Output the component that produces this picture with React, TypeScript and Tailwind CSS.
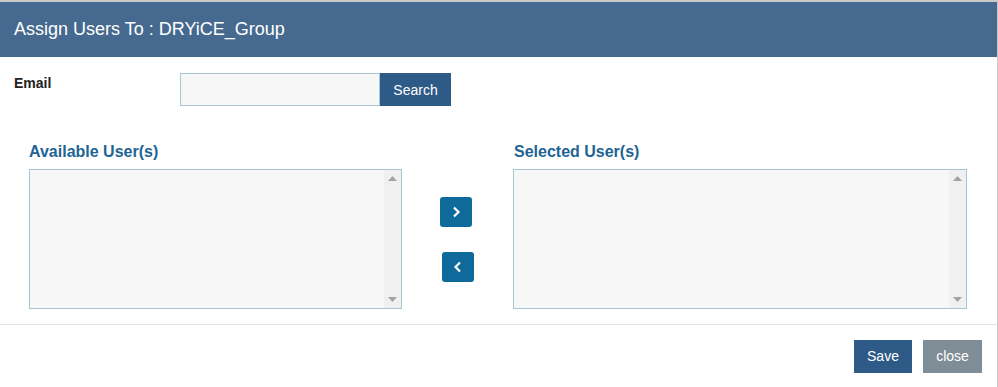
import React from "react";

function ListBox({ width }: { width: string }) {
  return (
    <div className={`${width} h-[140px] border border-[#a7c7d6] bg-[#f7f7f7] flex justify-end`}>
      <div className="w-[17px] h-full bg-[#f0f0f0] flex flex-col items-center justify-between py-[6px]">
        <svg width="9" height="5" viewBox="0 0 9 5"><polygon points="0,5 9,5 4.5,0" fill="#a3a3a3" /></svg>
        <svg width="9" height="5" viewBox="0 0 9 5"><polygon points="0,0 9,0 4.5,5" fill="#a3a3a3" /></svg>
      </div>
    </div>
  );
}

export default function App() {
  return (
    <div className="w-[998px] h-[387px] border-t-2 border-r border-[#c9c9c9] bg-white font-['Liberation_Sans',Arial,sans-serif] overflow-hidden">
      <div className="h-[55px] bg-[#466a8f] flex items-center pl-[14px] text-[18px] text-white">
        Assign Users To : DRYiCE_Group
      </div>
      <div className="flex mt-[16px]">
        <div className="w-[180px] pl-[14px] text-[14px] leading-[20px] font-bold text-[#222]">Email</div>
        <input className="w-[200px] h-[33px] border border-[#a7c7d6] bg-[#f7f7f7] outline-none" />
        <button className="w-[71px] h-[33px] bg-[#2e5a87] text-white text-[14px] pt-[1px]">Search</button>
      </div>
      <div className="flex mt-[36px] pl-[29px]">
        <div className="flex flex-col">
          <div className="text-[16px] font-bold text-[#1e6494] h-[20px] leading-[20px]">Available User(s)</div>
          <div className="mt-[7px]">
            <ListBox width="w-[373px]" />
          </div>
        </div>
        <div className="w-[111px] flex flex-col pt-[55px]">
          <button className="ml-[38px] w-[32px] h-[30px] rounded-[3px] bg-[#0f699b] flex items-center justify-center">
            <svg width="10" height="14" viewBox="0 0 10 14"><polyline points="3,2.5 7.5,7 3,11.5" fill="none" stroke="white" strokeWidth="2.2" /></svg>
          </button>
          <button className="ml-[40px] mt-[25px] w-[32px] h-[30px] rounded-[3px] bg-[#0f699b] flex items-center justify-center">
            <svg width="10" height="14" viewBox="0 0 10 14"><polyline points="7,2.5 2.5,7 7,11.5" fill="none" stroke="white" strokeWidth="2.2" /></svg>
          </button>
        </div>
        <div className="flex flex-col">
          <div className="pl-[1px] text-[16px] font-bold text-[#1e6494] h-[20px] leading-[20px]">Selected User(s)</div>
          <div className="mt-[7px]">
            <ListBox width="w-[454px]" />
          </div>
        </div>
      </div>
      <div className="mt-[15px] border-t border-[#e2e2e2]" />
      <div className="flex justify-end mt-[15px] pr-[15px] gap-[11px]">
        <button className="w-[58px] h-[33px] bg-[#2e5a87] text-white text-[14px]">Save</button>
        <button className="w-[59px] h-[33px] bg-[#7f8d96] text-white text-[14px]">close</button>
      </div>
    </div>
  );
}
